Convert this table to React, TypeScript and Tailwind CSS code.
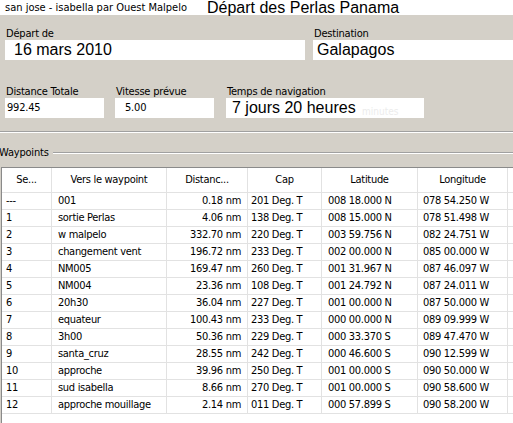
const rows = [
  ['---', '001', '0.18 nm', '201 Deg. T', '008 18.000 N', '078 54.250 W'],
  ['1', 'sortie Perlas', '4.06 nm', '138 Deg. T', '008 15.000 N', '078 51.498 W'],
  ['2', 'w malpelo', '332.70 nm', '220 Deg. T', '003 59.756 N', '082 24.751 W'],
  ['3', 'changement vent', '196.72 nm', '233 Deg. T', '002 00.000 N', '085 00.000 W'],
  ['4', 'NM005', '169.47 nm', '260 Deg. T', '001 31.967 N', '087 46.097 W'],
  ['5', 'NM004', '23.36 nm', '108 Deg. T', '001 24.792 N', '087 24.011 W'],
  ['6', '20h30', '36.04 nm', '227 Deg. T', '001 00.000 N', '087 50.000 W'],
  ['7', 'equateur', '100.43 nm', '233 Deg. T', '000 00.000 N', '089 09.999 W'],
  ['8', '3h00', '50.36 nm', '229 Deg. T', '000 33.370 S', '089 47.470 W'],
  ['9', 'santa_cruz', '28.55 nm', '242 Deg. T', '000 46.600 S', '090 12.599 W'],
  ['10', 'approche', '39.96 nm', '250 Deg. T', '001 00.000 S', '090 50.000 W'],
  ['11', 'sud isabella', '8.66 nm', '270 Deg. T', '001 00.000 S', '090 58.600 W'],
  ['12', 'approche mouillage', '2.14 nm', '011 Deg. T', '000 57.899 S', '090 58.200 W'],
];

const cols = [
  { title: 'Se...', w: 'w-[50px]', cell: 'pl-[4px]' },
  { title: 'Vers le waypoint', w: 'w-[115px]', cell: 'pl-[6px]' },
  { title: 'Distanc...', w: 'w-[81px]', cell: 'justify-end pr-[6px]' },
  { title: 'Cap', w: 'w-[74px]', cell: 'pl-[3px]' },
  { title: 'Latitude', w: 'w-[96px]', cell: 'pl-[6px]' },
  { title: 'Longitude', w: 'w-[90px]', cell: 'pl-[5px]' },
];

const ui = { fontFamily: '"DejaVu Sans Condensed", "DejaVu Sans", sans-serif' };
const big = { fontFamily: '"Liberation Sans", Arial, sans-serif' };

function Field({ label, value, w, large, pad }: { label: string; value: string; w: string; large?: boolean; pad: string }) {
  return (
    <div className={`flex flex-col ${w}`}>
      <span className="text-[11px] leading-[13px] tracking-[-0.2px] text-black pl-[1px]">{label}</span>
      <div className={`h-[20px] bg-white flex items-center ${pad}`}>
        {large ? (
          <span className="text-[16px] leading-none text-black" style={big}>{value}</span>
        ) : (
          <span className="text-[11px] tracking-[-0.2px] text-black">{value}</span>
        )}
      </div>
    </div>
  );
}

export default function App() {
  return (
    <div className="w-[513px] h-[423px] overflow-hidden bg-[#d4d0c8] flex flex-col" style={ui}>
      {/* title strip */}
      <div className="h-[15px] bg-white flex items-end">
        <span className="text-[11px] leading-[13px] pl-[5px] w-[207px] shrink-0 mb-[1px]">san jose - isabella par Ouest Malpelo</span>
        <span className="text-[16px] leading-[15px] mb-[0px]" style={big}>Départ des Perlas Panama</span>
      </div>

      <div className="flex gap-[8px] pl-[5px] mt-[12px]">
        <Field label="Départ de" value="16 mars 2010" w="w-[300px]" large pad="pl-[9px]" />
        <Field label="Destination" value="Galapagos" w="w-[200px]" large pad="pl-[4px]" />
      </div>

      <div className="flex pl-[5px] mt-[25px]">
        <Field label="Distance Totale" value="992.45" w="w-[99px]" pad="pl-[2px]" />
        <div className="w-[11px]" />
        <Field label="Vitesse prévue" value="5.00" w="w-[99px]" pad="pl-[10px]" />
        <div className="w-[12px]" />
        <div className="relative">
          <Field label="Temps de navigation" value="7 jours 20 heures" w="w-[198px]" large pad="pl-[6px]" />
          <span className="absolute left-[136px] top-[19px] text-[10px] text-[#ececec]">minutes</span>
        </div>
      </div>

      {/* separator */}
      <div className="mt-[13px] border-t border-[#a0a0a0] border-b border-b-white" />

      {/* group label */}
      <div className="flex items-center mt-[13px] ml-[-1px]">
        <span className="text-[11px] leading-[13px] tracking-[-0.2px]">Waypoints</span>
        <div className="flex-1 ml-[4px] border-t border-[#a0a0a0] border-b border-b-white" />
      </div>

      {/* list view */}
      <div className="mt-[8px] ml-[1px] flex-1 bg-white border-l border-t border-[#8a8a8a] text-[11px] tracking-[-0.3px] text-black">
        <div className="flex h-[25px] border-b border-[#e2e2e2]">
          {cols.map((c) => (
            <div key={c.title} className={`${c.w} shrink-0 border-r border-[#e2e2e2] flex items-center justify-center`}>
              {c.title}
            </div>
          ))}
          <div className="flex-1" />
        </div>
        {rows.map((r, i) => (
          <div key={i} className="flex h-[17px] border-b border-[#e2e2e2]">
            {cols.map((c, j) => (
              <div key={j} className={`${c.w} shrink-0 border-r border-[#e2e2e2] flex items-center whitespace-nowrap overflow-hidden ${c.cell}`}>
                {r[j]}
              </div>
            ))}
            <div className="flex-1" />
          </div>
        ))}
      </div>
    </div>
  );
}
